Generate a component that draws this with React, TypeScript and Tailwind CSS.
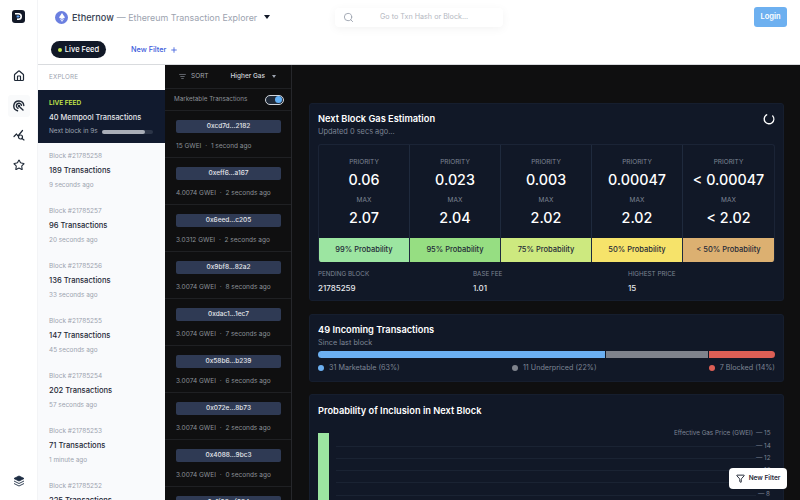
import React from "react";
import { Home, Star, Search, Plus, Filter, ListFilter } from "lucide-react";

const blocks = [
  ["21785258", "189 Transactions", "9 seconds ago"],
  ["21785257", "96 Transactions", "20 seconds ago"],
  ["21785256", "136 Transactions", "33 seconds ago"],
  ["21785255", "147 Transactions", "45 seconds ago"],
  ["21785254", "202 Transactions", "57 seconds ago"],
  ["21785253", "71 Transactions", "1 minute ago"],
  ["21785252", "225 Transactions", "1 minute ago"],
];

const txs = [
  ["0xcd7d...2182", "15 GWEI", "1 second ago"],
  ["0xeff6...a167", "4.0074 GWEI", "2 seconds ago"],
  ["0x6eed...c205", "3.0312 GWEI", "2 seconds ago"],
  ["0x9bf8...82a2", "3.0074 GWEI", "8 seconds ago"],
  ["0xdac1...1ec7", "3.0074 GWEI", "7 seconds ago"],
  ["0x58b6...b239", "3.0074 GWEI", "6 seconds ago"],
  ["0x072e...8b73", "3.0074 GWEI", "2 seconds ago"],
  ["0x4088...9bc3", "3.0074 GWEI", "0 seconds ago"],
  ["0x1f98...f984", "3.0074 GWEI", "0 seconds ago"],
];

const estimates = [
  ["0.06", "2.07", "99% Probability", "bg-[#9ce5a1]"],
  ["0.023", "2.04", "95% Probability", "bg-[#96de82]"],
  ["0.003", "2.02", "75% Probability", "bg-[#cde97f]"],
  ["0.00047", "2.02", "50% Probability", "bg-[#f6e36a]"],
  ["< 0.00047", "< 2.02", "< 50% Probability", "bg-[#dcb071]"],
];

function Logo() {
  return (
    <div className="w-[13px] h-[13px] rounded-[3px] bg-[#111827] flex items-center justify-center">
      <svg width="9" height="9" viewBox="0 0 9 9">
        <path d="M1 1h3.5a3.5 3.5 0 0 1 0 7H3V6.4h1.5a1.9 1.9 0 0 0 0-3.8H1z" fill="#fff" />
        <path d="M2.6 3.4h2.2l1 1.1-1 1.1H2.6z" fill="#60a5fa" />
      </svg>
    </div>
  );
}

function EthBadge() {
  return (
    <div className="w-[13px] h-[13px] rounded-full bg-[#6b7fe0] flex items-center justify-center">
      <svg width="6" height="9" viewBox="0 0 6 9">
        <path d="M3 0 L6 4.5 L3 6 L0 4.5Z" fill="#fff" />
        <path d="M3 6.7 L5.5 5.3 L3 9 L0.5 5.3Z" fill="#dfe4fb" />
      </svg>
    </div>
  );
}

function RadarIcon() {
  return (
    <svg width="12" height="12" viewBox="0 0 24 24" fill="none" stroke="#1f2937" strokeWidth="2.8" strokeLinecap="round">
      <path d="M9 21.5A10 10 0 1 1 21.6 11" />
      <path d="M10 16.5A5.2 5.2 0 1 1 17 10.5" />
      <circle cx="12" cy="12" r="1.2" fill="#1f2937" />
      <path d="M14 14.5 L20 20" />
    </svg>
  );
}

function NetworkIcon() {
  return (
    <svg width="12" height="12" viewBox="0 0 24 24" fill="none" stroke="#1f2937" strokeWidth="2.4" strokeLinecap="round" strokeLinejoin="round">
      <path d="M2 15 L7 10 L10 14 L19 3" />
      <circle cx="15" cy="16" r="4" />
      <path d="M18 19 L22 22" />
    </svg>
  );
}

function StackIcon() {
  return (
    <svg width="12" height="12" viewBox="0 0 24 24" fill="#1f2f45" stroke="#1f2f45" strokeWidth="1.8" strokeLinejoin="round">
      <path d="M12 2 L22 7 L12 12 L2 7Z" />
      <path d="M2 12 L12 17 L22 12" fill="none" />
      <path d="M2 17 L12 22 L22 17" fill="none" />
    </svg>
  );
}

function Spinner() {
  return (
    <svg width="12" height="12" viewBox="0 0 12 12" fill="none">
      <circle cx="6" cy="6" r="4.8" stroke="#ffffff" strokeWidth="1.4" strokeDasharray="23 7" strokeLinecap="round" transform="rotate(-40 6 6)" />
    </svg>
  );
}

export default function App() {
  return (
    <div className="w-[800px] h-[500px] overflow-hidden flex bg-white font-['Inter','Liberation_Sans',sans-serif]">
      {/* icon rail */}
      <div className="w-[38px] shrink-0 flex flex-col items-center border-r border-[#f3f4f6]">
        <div className="mt-[10px]"><Logo /></div>
        <div className="mt-[42px] flex flex-col items-center gap-[7.5px]">
          <div className="w-[22px] h-[22px] flex items-center justify-center"><Home size={12} color="#1f2937" strokeWidth={2.4} /></div>
          <div className="w-[22px] h-[22px] flex items-center justify-center rounded-[3px] bg-[#f9fafb]"><RadarIcon /></div>
          <div className="w-[22px] h-[22px] flex items-center justify-center"><NetworkIcon /></div>
          <div className="w-[22px] h-[22px] flex items-center justify-center"><Star size={12} color="#1f2937" strokeWidth={2.2} /></div>
        </div>
        <div className="mt-auto mb-[13px]"><StackIcon /></div>
      </div>

      <div className="flex-1 min-w-0 flex flex-col">
        {/* header */}
        <div className="h-[65px] shrink-0 relative border-b border-[#d9dbde]">
          <div className="flex items-start h-[35px] pt-[11px] pl-[17px] pr-[13px]">
            <EthBadge />
            <span className="ml-[4px] text-[9.2px] leading-[13px] font-medium text-[#374151]">Ethernow</span>
            <span className="ml-[3px] text-[8.9px] leading-[13px] text-[#9ca3af]">— Ethereum Transaction Explorer</span>
            <svg className="ml-[7px] mt-[4px]" width="6" height="4" viewBox="0 0 6 4"><path d="M0 0h6L3 4z" fill="#111827" /></svg>
            <div className="absolute left-[297px] top-[8px] w-[168px] h-[19px] rounded-[4px] bg-white shadow-[0_2px_10px_rgba(0,0,0,0.05)] flex items-center">
              <Search size={11} color="#9ca3af" className="ml-[8px]" />
              <span className="ml-[26px] text-[7.2px] text-[#b4b8bf]">Go to Txn Hash or Block...</span>
            </div>
            <div className="ml-auto w-[33px] h-[20px] -mt-[4px] rounded-[3px] bg-[#6db0f0] flex items-center justify-center text-[7.5px] font-semibold text-white">Login</div>
          </div>
          <div className="flex items-center pl-[13px] pt-[6px]">
            <div className="h-[17px] w-[55px] rounded-full bg-[#111827] flex items-center justify-center gap-[3px]">
              <span className="w-[4px] h-[4px] rounded-full bg-[#c5e84a]"></span>
              <span className="text-[7.5px] font-medium text-white">Live Feed</span>
            </div>
            <span className="ml-[25px] mt-[1px] text-[7.3px] font-medium text-[#3b5bdb]">New Filter</span>
            <Plus size={8} color="#3b5bdb" strokeWidth={2.5} className="ml-[4px]" />
          </div>
        </div>

        <div className="flex-1 min-h-0 flex">
          {/* blocks column */}
          <div className="w-[127px] shrink-0 bg-[#f9fafc] overflow-hidden">
            <div className="h-[25px] flex items-center pl-[11px] text-[6.3px] tracking-wide text-[#9ca3af] bg-white">EXPLORE</div>
            <div className="h-[53px] bg-[#111a2e] pl-[11px] pt-[9px]">
              <div className="text-[6.5px] leading-[9px] font-semibold text-[#c5e84a]">LIVE FEED</div>
              <div className="mt-[5px] text-[7.4px] leading-[10px] font-medium text-[#e5e7eb]">40 Mempool Transactions</div>
              <div className="mt-[4px] flex items-center">
                <span className="text-[6.4px] leading-[9px] text-[#9ca3af]">Next block in 9s</span>
                <div className="ml-[4px] w-[51px] h-[4px] rounded-full bg-[#2b3447]">
                  <div className="w-[43px] h-[4px] rounded-full bg-[#a9aeb8]"></div>
                </div>
              </div>
            </div>
            {blocks.map((b) => (
              <div key={b[0]} className="h-[55px] pl-[11px] pt-[9px]">
                <div className="text-[6.5px] leading-[9px] text-[#9ca3af]">Block #{b[0]}</div>
                <div className="mt-[5px] text-[7.6px] leading-[10px] font-medium text-[#1f2937]">{b[1]}</div>
                <div className="mt-[5px] text-[6.4px] leading-[9px] text-[#9ca3af]">{b[2]}</div>
              </div>
            ))}
          </div>

          {/* tx column */}
          <div className="w-[127px] shrink-0 bg-[#0f0f10] border-r border-[#26272b] overflow-hidden">
            <div className="h-[24px] flex items-center pl-[14px] border-b border-[#1f2023]">
              <ListFilter size={7} color="#9ca3af" />
              <span className="ml-[5px] text-[6.5px] text-[#a3a7ae]">SORT</span>
              <span className="ml-[22px] text-[6.5px] font-medium text-[#d1d5db]">Higher Gas</span>
              <svg className="ml-[7px]" width="4" height="3" viewBox="0 0 4 3"><path d="M0 0h4L2 3z" fill="#9ca3af" /></svg>
            </div>
            <div className="h-[22px] flex items-center pl-[9px] border-b border-[#1f2023]">
              <span className="text-[6.3px] text-[#8b8f97] w-[91px] whitespace-nowrap">Marketable Transactions</span>
              <div className="w-[19px] h-[10px] rounded-full border border-[#d1d5db] bg-[#1f2937] flex items-center justify-end pr-[1px]">
                <span className="w-[7px] h-[7px] rounded-full bg-[#63b0f5]"></span>
              </div>
            </div>
            {txs.map((t) => (
              <div key={t[0]} className="h-[47px] border-b border-[#1f2023] pl-[11px] pt-[9px]">
                <div className="w-[105px] h-[13px] rounded-[2px] bg-[#2f3a54] flex items-center justify-center text-[6.5px] font-medium text-[#e5e7eb]">{t[0]}</div>
                <div className="mt-[9px] text-[6.5px] leading-[9px] text-[#8b8f97] whitespace-nowrap">
                  {t[1]} <span className="mx-[2px]">·</span> {t[2]}
                </div>
              </div>
            ))}
          </div>

          {/* main */}
          <div className="flex-1 min-w-0 bg-[#0f0f10] pl-[17px] pr-[16px] pt-[38px] overflow-hidden relative">
            <div className="rounded-[3px] bg-[#111827] border border-[#161e2e] px-[8px] pt-[8px] h-[198px]">
              <div className="flex items-start justify-between">
                <div>
                  <div className="text-[9.25px] leading-[13px] font-semibold text-white">Next Block Gas Estimation</div>
                  <div className="mt-[1px] text-[7.4px] leading-[12px] text-[#7d8594]">Updated 0 secs ago...</div>
                </div>
                <div className="mt-[1px]"><Spinner /></div>
              </div>
              <div className="mt-[6px] rounded-[3px] overflow-hidden border border-[#1b2436] border-b-0 grid grid-cols-5">
                {estimates.map((e, i) => (
                  <div key={i} className={i < 4 ? "border-r border-[#1f2a3d]" : ""}>
                    <div className="h-[93px] flex flex-col items-center pt-[13px]">
                      <div className="text-[6.5px] leading-[9px] text-[#7d8594]">PRIORITY</div>
                      <div className="mt-[4px] text-[14.3px] leading-[18px] font-medium text-white">{e[0]}</div>
                      <div className="mt-[7px] text-[6.5px] leading-[9px] text-[#7d8594]">MAX</div>
                      <div className="mt-[4px] text-[14.3px] leading-[18px] font-medium text-white">{e[1]}</div>
                    </div>
                    <div className={"h-[24px] flex items-center justify-center text-[7.5px] font-medium text-[#1f2937] " + e[3]}>{e[2]}</div>
                  </div>
                ))}
              </div>
              <div className="mt-[8px] flex">
                {[["PENDING BLOCK", "21785259"], ["BASE FEE", "1.01"], ["HIGHEST PRICE", "15"]].map((s) => (
                  <div key={s[0]} className="w-[155px] shrink-0">
                    <div className="text-[6.3px] leading-[9px] text-[#7d8594]">{s[0]}</div>
                    <div className="mt-[4px] text-[8px] leading-[10px] font-medium text-[#e5e7eb]">{s[1]}</div>
                  </div>
                ))}
              </div>
            </div>

            <div className="mt-[13px] h-[68px] rounded-[3px] bg-[#111827] border border-[#161e2e] px-[8px] pt-[8px]">
              <div className="text-[9.25px] leading-[13px] font-semibold text-white">49 Incoming Transactions</div>
              <div className="mt-[1px] text-[7.3px] leading-[11px] text-[#7d8594]">Since last block</div>
              <div className="mt-[3px] h-[7px] flex gap-[1px] rounded-full overflow-hidden">
                <div className="w-[287px] bg-[#6cb0f2]"></div>
                <div className="w-[102px] bg-[#7f838c]"></div>
                <div className="flex-1 bg-[#dd5f55]"></div>
              </div>
              <div className="mt-[4px] flex justify-between text-[7.2px] leading-[11px] text-[#7d8594]">
                {[["31 Marketable (63%)", "bg-[#6cb0f2]"], ["11 Underpriced (22%)", "bg-[#7f838c]"], ["7 Blocked (14%)", "bg-[#dd5f55]"]].map((l) => (
                  <div key={l[0]} className="flex items-center gap-[5px]">
                    <span className={"w-[6px] h-[6px] rounded-full " + l[1]}></span>
                    {l[0]}
                  </div>
                ))}
              </div>
            </div>

            <div className="mt-[12px] h-[200px] rounded-[3px] bg-[#111827] border border-[#161e2e] px-[8px] pt-[9px]">
              <div className="text-[9.25px] leading-[13px] font-semibold text-white">Probability of Inclusion in Next Block</div>
              <div className="mt-[16px] flex">
                <div className="w-[11px] h-[200px] bg-[#9ce5a1] shrink-0"></div>
                <div className="flex-1 ml-[7px] -mt-[5px]">
                  {["15", "14", "12", "10", "9", "8"].map((n) => (
                    <div key={n} className="h-[12.2px] flex items-center text-[6.3px] text-[#7d8594]">
                      {n === "15" ? <span className="ml-auto mr-[3px] whitespace-nowrap">Effective Gas Price (GWEI)</span> : <div className="flex-1 h-px bg-[#1a2333]"></div>}
                      <span className="w-[19px] shrink-0 text-right pr-[5px] whitespace-nowrap">— {n}</span>
                    </div>
                  ))}
                </div>
              </div>
            </div>

            <div className="absolute right-[13px] bottom-[11px] w-[58px] h-[21px] rounded-[4px] bg-white flex items-center justify-center gap-[4px]">
              <Filter size={9} color="#111827" strokeWidth={2.4} />
              <span className="text-[6.5px] font-semibold text-[#1f2937]">New Filter</span>
            </div>
          </div>
        </div>
      </div>
    </div>
  );
}
